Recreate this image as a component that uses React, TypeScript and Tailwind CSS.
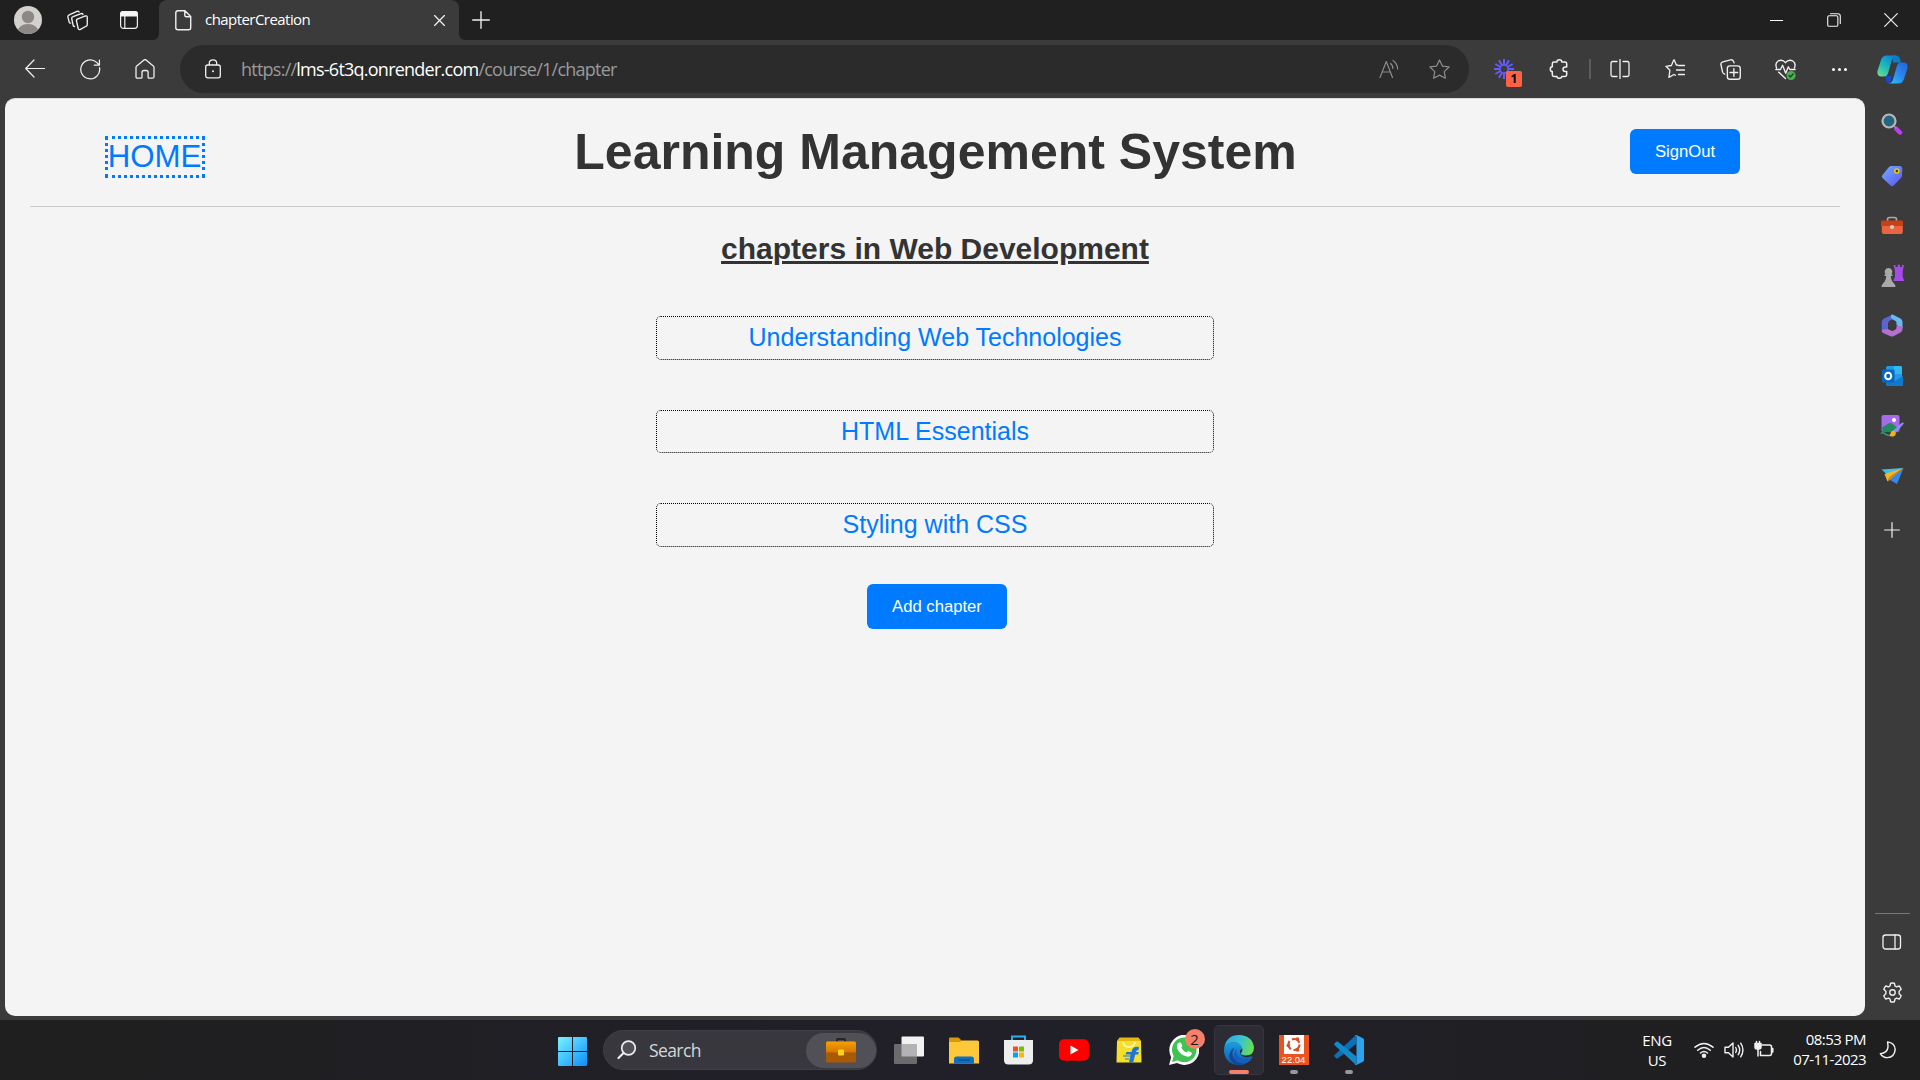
import React from 'react';

type IconProps = { children: React.ReactNode; size?: number; sw?: number; color?: string };

function Line({ children, size = 20, sw = 1.2, color = '#f0f0f0' }: IconProps) {
  return (
    <svg
      width={size}
      height={size}
      viewBox="0 0 20 20"
      fill="none"
      stroke={color}
      strokeWidth={sw}
      strokeLinecap="round"
      strokeLinejoin="round"
      className="shrink-0"
    >
      {children}
    </svg>
  );
}

function Slot({ className, children }: { className: string; children: React.ReactNode }) {
  return <div className={`flex shrink-0 items-center justify-center ${className}`}>{children}</div>;
}

const starPath = 'M10 .9l2.8 5.8 6.3.9-4.6 4.4 1.1 6.3L10 15.4l-5.6 2.9 1.1-6.3L.9 7.600l6.300-.9z';

function TabStrip() {
  return (
    <div className="flex h-10">
      <div className="flex w-[159px] items-center rounded-br-[6px] bg-[#202020]">
        <Slot className="w-14">
          <svg width="28" height="28" viewBox="0 0 28 28">
            <defs>
              <clipPath id="avatar">
                <circle cx="14" cy="14" r="14" />
              </clipPath>
            </defs>
            <g clipPath="url(#avatar)">
              <rect width="28" height="28" fill="#d3d1ce" />
              <circle cx="14" cy="11" r="6.2" fill="#8d8885" />
              <ellipse cx="14" cy="26" rx="10.5" ry="8" fill="#8d8885" />
            </g>
          </svg>
        </Slot>
        <Slot className="w-[43px]">
          <Line size={21} sw={1.3}>
            <path d="M11.500 8l6.100-2.300q1.700-.5 1.700 1.100v6.900q0 1.300-1.200 1.800l-5.300 2.900q-1.700.8-2.200-1L9 10.400q-.4-1.700 2.500-2.400z" />
            <path d="M7.200 15.700q-1 .2-1.300-.9L4.500 8.300q-.3-1.500 1.300-2L13.500 3.400q1.400-.4 1.700.9" />
            <path d="M3.400 12.500q-1 .1-1.300-.9L.9 6.800q-.3-1.500 1.200-2.100L9.600 1.300q1.400-.5 1.900.6" />
          </Line>
        </Slot>
        <Slot className="w-[60px]">
          <svg width="18" height="18" viewBox="0 0 18 18" fill="none" stroke="#f0f0f0" strokeWidth="1.200">
            <rect x=".6" y=".6" width="16.800" height="16.800" rx="2.800" />
            <path d="M3.400 .5h11.200Q17.500 .5 17.500 3.400V5H.5V3.400Q.5 .5 3.400 .5z" fill="#f6f6f6" />
            <path d="M4.800 5v12.500" />
          </svg>
        </Slot>
      </div>
      <div className="w-[300px] bg-[#202020]">
        <div className="flex h-10 items-center rounded-t-[8px] bg-[#3b3b3b] pr-[14px] pl-4">
          <svg width="17" height="21" viewBox="0 0 17 21" fill="none" stroke="#f0f0f0" strokeWidth="1.400" strokeLinejoin="round">
            <path d="M3 .8h7l5.700 5.700V17.800q0 2-2 2H3q-2.200 0-2.200-2V3q0-2.200 2.200-2.200zM9.800 1v4.200q0 1.500 1.500 1.500h4.200" />
          </svg>
          <span className="mt-[-2px] ml-[13px] flex-1 text-[15px] leading-5 tracking-[-0.550px] text-white">chapterCreation</span>
          <Line size={11} sw={2.300}>
            <path d="M1 1l18 18M19 1L1 19" />
          </Line>
        </div>
      </div>
      <div className="flex flex-1 items-center justify-between rounded-bl-[6px] bg-[#202020]">
        <Slot className="w-[43px]">
          <Line size={18} sw={1.500}>
            <path d="M10 .8v18.400M.8 10h18.400" />
          </Line>
        </Slot>
        <div className="flex">
          <Slot className="w-[57px]">
            <div className="h-px w-[13px] bg-white" />
          </Slot>
          <Slot className="w-[57px]">
            <Line size={14} sw={1.600}>
              <rect x="1" y="4" width="14.500" height="15" rx="2" />
              <path d="M5 1h10.500q3.500 0 3.500 3.500V15" />
            </Line>
          </Slot>
          <Slot className="w-[58px]">
            <Line size={14} sw={1.700}>
              <path d="M1 1l18 18M19 1L1 19" />
            </Line>
          </Slot>
        </div>
      </div>
    </div>
  );
}

function Copilot() {
  return (
    <svg width="31" height="29" viewBox="0 0 31 29">
      <defs>
        <linearGradient id="cpA" x1="0" y1="1" x2=".7" y2="0">
          <stop offset="0" stopColor="#7be08a" />
          <stop offset=".5" stopColor="#1ebbb8" />
          <stop offset="1" stopColor="#0a86d8" />
        </linearGradient>
        <linearGradient id="cpB" x1="1" y1="0" x2="0" y2="1">
          <stop offset="0" stopColor="#2363d8" />
          <stop offset=".5" stopColor="#2a87ee" />
          <stop offset="1" stopColor="#2cc5f5" />
        </linearGradient>
      </defs>
      <path d="M8 21h7l-2 7.500q-3 0-4-3z" fill="#1648d0" />
      <path d="M15 .5h4q3 0 4 3.500l1 3.500h-8z" fill="#087fce" />
      <path d="M9.500 .5H19q-3 .5-4 4l-4 14q-1 3-4 3H4.500Q-.5 21.500.6 15.500L4 5Q5.500 .5 9.500 .5z" fill="url(#cpA)" />
      <path d="M21.500 28.500H12q3-.5 4-4l4-14q1-3 4-3h2.500q5 0 3.900 6L27 24q-1.500 4.500-5.500 4.500z" fill="url(#cpB)" />
    </svg>
  );
}

function Toolbar() {
  return (
    <div className="flex h-[58px] items-start pt-[5px]">
      <div className="flex h-12 w-[180px] items-center pl-[7px]">
        <Slot className="w-[56px]">
          <Line size={20}>
            <path d="M19.500 9.500H.8M9 1L.7 9.500 9 18" />
          </Line>
        </Slot>
        <Slot className="w-[54px]">
          <Line size={21}>
            <path d="M18.600 8.200A9 9 0 1 1 15.800 3.200l2.700 2.600M18.500 1v4.800h-4.900" />
          </Line>
        </Slot>
        <Slot className="w-[56px]">
          <Line size={20} sw={1.300}>
            <path d="M1 8.500q0-.9.700-1.600L9 .9q1-.7 2 0l7.300 6q.7.700.7 1.600v9.200q0 1.500-1.500 1.500h-3.400q-1 0-1-1v-4.700q0-2-2-2H9q-2 0-2 2v4.700q0 1-1 1H2.500Q1 19.200 1 17.700z" />
          </Line>
        </Slot>
      </div>
      <div className="flex h-12 w-[1289px] items-center rounded-full bg-[#2b2b2b] pl-[25px]">
        <svg width="16" height="20" viewBox="0 0 16 20" fill="none" stroke="#f0f0f0" strokeWidth="1.300">
          <rect x=".7" y="6" width="14.600" height="12.800" rx="2" />
          <path d="M4.300 6V4.300q0-3.500 3.700-3.500t3.700 3.500V6" />
          <circle cx="8" cy="12.300" r="1" fill="#f0f0f0" stroke="none" />
        </svg>
        <div className="mt-[-1px] ml-[20px] flex-1 text-[18px] leading-6 tracking-[-0.760px] whitespace-nowrap text-[#9a9a9a]">
          https://<span className="text-white">lms-6t3q.onrender.com</span>/course/1/chapter
        </div>
        <Slot className="w-[50px]">
          <Line size={20} color="#8b8b8b">
            <path d="M1 18.500L7.300 2.500l6.200 16M3.200 13h8.200M11.500 4.500q2.500 1.800 2.300 5M14 1.500q4.300 3 4.600 8.500" />
          </Line>
        </Slot>
        <Slot className="mr-[5px] w-[50px]">
          <Line size={21} color="#8b8b8b">
            <path d={starPath} />
          </Line>
        </Slot>
      </div>
      <div className="flex h-12 flex-1 items-center pl-[8px]">
        <Slot className="w-[54px]">
          <div className="relative size-[20px]">
            <svg width="20" height="20" viewBox="0 0 20 20" stroke="#635bff" strokeWidth="2" fill="none">
              <circle cx="10" cy="10" r="4" strokeWidth="1.500" />
              <path d="M10 0v6M10 14v6M0 10h6M14 10h6M5 1.300l3 5.200M15 1.300l-3 5.200M5 18.700l3-5.200M15 18.700l-3-5.200M1.300 5l5.200 3M18.700 5l-5.200 3M1.300 15l5.200-3M18.700 15l-5.200-3" />
            </svg>
            <div className="absolute top-[12px] left-[12px] flex h-[16px] w-[16px] items-center justify-center rounded-[2px] bg-[#ff6242] font-['Open_Sans',sans-serif] text-[12px] leading-none font-bold text-black">
              1
            </div>
          </div>
        </Slot>
        <Slot className="w-[56px]">
          <Line size={20} sw={1.500}>
            <path d="M5 3h3Q7.800 .8 10.300 .8T12.800 3h3.200q1.700 0 1.700 1.700v3.200h-1.500q-2.200.2-2.200 2.300t2.200 2.200h1.500v3.400q0 1.700-1.700 1.700h-3.200q-.2 1.800-2.500 1.800T7.900 17.500h-3q-1.600 0-1.600-1.700v-3.200Q1.300 12.500 1.300 10.200T3.300 7.800V4.700Q3.300 3 5 3z" />
          </Line>
        </Slot>
        <div className="mx-[2px] h-5 w-[2px] bg-[#5c5c5c]" />
        <Slot className="w-[54px]">
          <Line size={20} sw={1.300}>
            <path d="M7 2.500H2.700Q1 2.500 1 4.200v11.600q0 1.700 1.700 1.700H7M13 2.500h4.300q1.700 0 1.700 1.700v11.600q0 1.700-1.700 1.700H13M10 .5v19" />
          </Line>
        </Slot>
        <Slot className="w-[56px]">
          <Line size={20} sw={1.300}>
            <path d="M12.500 6L11.300 6 9.500 1.400Q9 .6 8.500 1.400L6.400 6.500.9 7.300l4 3.900-1 7.200L9 15.500l1.500.8M13.500 6.500H19.500M11.500 11h8M13.500 15.500h6" />
          </Line>
        </Slot>
        <Slot className="w-[55px]">
          <Line size={21} sw={1.300}>
            <rect x="7" y="6.500" width="12.300" height="12.800" rx="2.500" />
            <path d="M13.200 9.300v7.200M9.500 12.900h7.300M4.500 14.500q-1.500-.5-2-2L.9 5.500Q.5 3.300 2.700 2.700L10 .8q2-.4 2.900 1.500l.5 1.400" />
          </Line>
        </Slot>
        <Slot className="w-[55px]">
          <Line size={21} sw={1.300}>
            <path d="M1.500 8.500Q-.3 4 3 1.900 7-.2 10 3.500 13-.2 17 1.900q3.300 2.100 1.500 6.600M.8 10h4.400l2-4 3 7.500 2.500-6 1.500 2.500h5M3.500 12.500l6.500 6" />
            <circle cx="15.300" cy="15.700" r="4.300" fill="#4caf50" stroke="none" />
            <path d="M13.300 15.800l1.400 1.400 2.600-3" stroke="#1e3d20" />
          </Line>
        </Slot>
        <Slot className="w-[53px]">
          <div className="flex gap-[3px]">
            <i className="size-[3px] rounded-full bg-white" />
            <i className="size-[3px] rounded-full bg-white" />
            <i className="size-[3px] rounded-full bg-white" />
          </div>
        </Slot>
        <Slot className="w-[52px]">
          <Copilot />
        </Slot>
      </div>
    </div>
  );
}

const chapters: { title: string; box: string }[] = [
  { title: 'Understanding Web Technologies', box: 'h-[44px] pb-px' },
  { title: 'HTML Essentials', box: 'h-[43px]' },
  { title: 'Styling with CSS', box: 'h-[44px] pb-px' },
];

function Page() {
  return (
    <main className="flex h-[918px] w-[1860px] flex-col rounded-[10px] border-t border-[#dadada] bg-[#f4f4f4] px-[25px] font-['Liberation_Sans',Arial,sans-serif]">
      <header className="flex h-[108px] items-start justify-between border-b border-[#cccccc] pr-[100px] pl-[75px]">
        <a className="mt-[37px] flex h-[42px] w-[100px] items-center justify-center border-[3px] border-dotted border-[#007bff] pr-px text-[31.250px] leading-[36px] text-[#007bff]">
          HOME
        </a>
        <h1 className="mt-[24px] ml-[36px] text-[50px] leading-[58px] font-bold whitespace-nowrap text-[#333333]">
          Learning Management System
        </h1>
        <button className="mt-[30px] h-[45px] w-[110px] rounded-[6px] bg-[#007bff] text-[16.670px] text-white">SignOut</button>
      </header>
      <h2 className="mt-[24px] text-center text-[30px] leading-[35px] font-bold text-[#333333] underline">
        chapters in Web Development
      </h2>
      <ul className="mt-[50px] flex flex-col items-center gap-[50px]">
        {chapters.map((c) => (
          <li
            key={c.title}
            className={`flex w-[558px] items-center justify-center rounded-[5px] border border-dotted border-black text-[25px] leading-[29px] text-[#007bff] ${c.box}`}
          >
            {c.title}
          </li>
        ))}
      </ul>
      <button className="mt-[37px] ml-[4px] h-[45px] w-[140px] self-center rounded-[6px] bg-[#007bff] text-[16.670px] text-white">
        Add chapter
      </button>
    </main>
  );
}

function Sidebar() {
  return (
    <aside className="flex w-[55px] flex-col items-center pr-px pb-[5px]">
      <Slot className="h-[52px]">
        <svg width="22" height="22" viewBox="0 0 22 22">
          <path d="M15.500 16l3.500 3.500" stroke="#c03cf5" strokeWidth="4.500" strokeLinecap="round" />
          <path d="M12.500 12.500l3 3" stroke="#888" strokeWidth="2" />
          <circle cx="8" cy="8" r="6.500" fill="#236684" stroke="#b9b7b4" strokeWidth="2.200" />
        </svg>
      </Slot>
      <Slot className="h-[51px]">
        <svg width="22" height="22" viewBox="0 0 22 22">
          <defs>
            <linearGradient id="tagG" x1="0" y1="0" x2="1" y2="1">
              <stop offset="0" stopColor="#76adff" />
              <stop offset="1" stopColor="#5654f0" />
            </linearGradient>
          </defs>
          <path d="M10 1h9q2.300 0 2.300 2.500l-.3 7q0 1.500-1 2.500l-7.500 7.600q-1.500 1.200-3 0l-8-7.600q-1.500-1.500 0-3L8 1.900Q9 1 10 1z" fill="url(#tagG)" />
          <circle cx="15.800" cy="6" r="2" fill="#333" stroke="#f0c800" strokeWidth="1.600" />
        </svg>
      </Slot>
      <Slot className="h-[50px]">
        <svg width="24" height="20" viewBox="0 0 24 20">
          <path d="M7.500 6V3.500Q7.500 1.500 9.500 1.500h5q2 0 2 2V6" fill="none" stroke="#a9a9a9" strokeWidth="1.700" />
          <rect x="1.800" y="5" width="21" height="13" rx="2" fill="#ea653e" />
          <path d="M1 5.500q0-1 1-1h20q1 0 1 1V10H1z" fill="#c83f18" />
          <circle cx="12" cy="11" r="2.100" fill="#cfcfcf" />
        </svg>
      </Slot>
      <Slot className="h-[49px]">
        <svg width="23" height="24" viewBox="0 0 23 24">
          <path d="M12.500 1h2v2h2V.7h2.500V3h2V1H23l-1.300 6v6l1.300 3v1H12.500v-1l1.500-3V7z" fill="#a64be8" />
          <path d="M7.500 4a4 4 0 0 1 3 6.500h1V12h-1.700q.3 5 3.200 7.500 1.500 1 1.500 3.500H.5q0-2.500 1.500-3.500Q5 17 5.200 12H3.500v-1.500h1A4 4 0 0 1 7.500 4z" fill="#a9a9a9" />
        </svg>
      </Slot>
      <Slot className="h-[51px]">
        <svg width="22" height="23" viewBox="0 0 22 23">
          <path d="M12 .6L3 4.500Q.7 6 .7 8.500v7.500q0 2 1.800 3.200L7 16V9.500q0-2 2-3l4.500-2z" fill="#5b65d0" />
          <path d="M10 .9q1.200-.6 2.500 0l7 3.600q2 1.300 2 3.700v6L15.500 11V8.500q0-1-1-1.500L11 5q-2-2-1-4.100z" fill="#69b9f2" />
          <path d="M21.500 12.500V15q0 2.500-2 3.500l-7 3.700q-1.500.8-3 0L2 19Q.7 18 .7 16l6-1 4 1.800q1 .3 2-.3l2-1.300q.8-.7.8-2v-1.700z" fill="#b56fd0" />
        </svg>
      </Slot>
      <Slot className="h-[49px]">
        <svg width="22" height="22" viewBox="0 0 22 22">
          <rect x="5" y="1" width="16" height="17" rx="1.500" fill="#1f9be8" />
          <path d="M13 1h6.500Q21 1 21 2.500V9h-8z" fill="#34b6f5" />
          <path d="M5 13l9 3 8-5v9q0 1-1 1H6q-1 0-1-1z" fill="#1278cc" />
          <rect x="1" y="4.500" width="12.500" height="13" rx="1.200" fill="#0868be" />
          <ellipse cx="7.200" cy="11" rx="3" ry="3.300" fill="none" stroke="#fff" strokeWidth="2" />
        </svg>
      </Slot>
      <Slot className="h-[51px]">
        <svg width="25" height="24" viewBox="0 0 25 24">
          <rect x="1.500" y="1" width="18" height="17" rx="2" fill="#a86be8" />
          <path d="M2 13.500l6.500-4q2-1 4 .3l5 4V18H3z" fill="#1e8c5c" />
          <circle cx="14" cy="6" r="2" fill="#fff" />
          <path d="M13 16.500L21.500 9q2-1 2.300.5l-8 9.500z" fill="#8b8df5" />
          <path d="M9 21.500q1.500-1 2-3.500 2-2.500 4.500 0 1 3-1.500 4.200-3 1-5-.7z" fill="#f2b01e" />
          <path d="M1 19.500q2-1.500 3.500 0T9 21.500" stroke="#24a36c" strokeWidth="1.600" fill="none" />
        </svg>
      </Slot>
      <Slot className="h-[50px]">
        <svg width="23" height="18" viewBox="0 0 23 18">
          <path d="M.5 2.500L22.500 1 7 8.500z" fill="#3dc0e8" />
          <path d="M22.500 1l-6.500 16-8-4.500z" fill="#3486f0" />
          <path d="M22.500 1L3.500 7l3 7.500L9 10z" fill="#f4b52a" />
          <path d="M22.500 1L9 10l-2.500 5 4-3.500z" fill="#d98b10" />
        </svg>
      </Slot>
      <Slot className="h-[58px]">
        <Line size={16} sw={1.500}>
          <path d="M10 .8v18.400M.8 10h18.400" />
        </Line>
      </Slot>
      <div className="mt-auto h-px w-[35px] bg-[#777777]" />
      <Slot className="h-[55px]">
        <Line size={20} sw={1.300}>
          <rect x="1" y="3" width="17.500" height="14" rx="2.500" />
          <path d="M13 3v14" />
        </Line>
      </Slot>
      <Slot className="h-[46px]">
        <Line size={21} sw={1.300}>
          <path d="M8.200 1.200q1.800-.5 3.600 0l.6 2.600 1.400.8 2.600-.8q1.300 1.300 1.900 3.200l-2 1.900v2.200l2 1.900q-.6 1.900-1.900 3.200l-2.600-.8-1.400.8-.6 2.600q-1.800.5-3.600 0l-.6-2.600-1.400-.8-2.600.8Q2.300 14.900 1.700 13l2-1.900V8.900l-2-1.900q.6-1.900 1.900-3.200l2.600.8 1.400-.8z" />
          <circle cx="10" cy="10" r="2.600" />
        </Line>
      </Slot>
    </aside>
  );
}

function Taskbar() {
  return (
    <footer className="flex h-[60px] items-center bg-linear-to-r from-[#1f1f1f] via-[#21202a] to-[#1f1f1f] pl-[558px]">
      <svg width="29" height="29" viewBox="0 0 29 29" className="mt-[2px]">
        <defs>
          <linearGradient id="winG" x1="0" y1="0" x2="1" y2="1">
            <stop offset="0" stopColor="#7af3ff" />
            <stop offset="1" stopColor="#0b8efc" />
          </linearGradient>
        </defs>
        <path d="M1 0h13v14H0V1q0-1 1-1zM15 0h13q1 0 1 1v13H15zM0 15h14v14H1q-1 0-1-1zM15 15h14v13q0 1-1 1H15z" fill="url(#winG)" />
      </svg>
      <div className="ml-[16px] flex h-10 w-[274px] items-center rounded-full border border-[#403f46] bg-[#38373e] pl-[13px]">
        <svg width="20" height="20" viewBox="0 0 20 20" fill="none" stroke="#eeeeee" strokeWidth="1.700">
          <circle cx="11.500" cy="8" r="6.800" fill="#505057" />
          <path d="M6.500 13L1.500 18" strokeWidth="2.200" strokeLinecap="round" />
        </svg>
        <span className="ml-[12px] flex-1 text-[17.500px] leading-6 tracking-[-0.6px] text-[#d6d6d8]">Search</span>
        <div className="flex h-[35px] w-[70px] items-center justify-center rounded-full bg-[#515057]">
          <svg width="30" height="25" viewBox="0 0 30 25">
            <defs>
              <linearGradient id="bagA" x1="0" y1="0" x2="0" y2="1">
                <stop offset="0" stopColor="#f7a000" />
                <stop offset="1" stopColor="#d37500" />
              </linearGradient>
            </defs>
            <path d="M11 4V2q0-1 1-1h6q1 0 1 1v2" stroke="#252525" strokeWidth="2" fill="none" />
            <rect y="3.500" width="30" height="21" rx="1.500" fill="#a85a08" />
            <path d="M0 5q0-1.500 1.500-1.500h27Q30 3.500 30 5v9.500H0z" fill="url(#bagA)" />
            <rect x="12" y="11.500" width="6" height="6" rx="1" fill="#ffd21e" />
          </svg>
        </div>
      </div>
      <div className="ml-[4px] flex items-center">
        <Slot className="h-[50px] w-[55px]">
          <svg width="30" height="28" viewBox="0 0 30 28">
            <rect x="7.500" y=".5" width="22.500" height="20" rx="1" fill="#f2f2f2" />
            <rect y="8" width="23" height="20" rx="1" fill="#6b6b6e" />
            <rect x="7.500" y="8" width="15.500" height="12.500" fill="#b3b3b5" />
          </svg>
        </Slot>
        <Slot className="h-[50px] w-[55px]">
          <svg width="30" height="27" viewBox="0 0 30 27">
            <path d="M0 1.500Q0 .5 1 .5h8.500L13 4v6H0z" fill="#d99a08" />
            <path d="M0 5h11l2-1.500h15.500Q30 3.500 30 5v21.500H0z" fill="#fdc83a" />
            <path d="M5 26.500V22q0-2.500 2.500-2.500h15Q25 19.500 25 22v4.500z" fill="#0f6fc0" />
            <path d="M9 23h12" stroke="#0a4c8c" strokeWidth="1.300" />
          </svg>
        </Slot>
        <Slot className="h-[50px] w-[55px]">
          <svg width="29" height="30" viewBox="0 0 29 30">
            <path d="M8 6V1.500h13V6" stroke="#2cb0ea" strokeWidth="2" fill="none" />
            <path d="M0 5h29v20q0 4.500-4.500 4.500h-20Q0 29.500 0 25z" fill="#eeeeee" />
            <path d="M9 11.500h5v5H9z" fill="#f04e25" />
            <path d="M15 11.500h5v5h-5z" fill="#80bb08" />
            <path d="M9 17.500h5v5H9z" fill="#05a5ee" />
            <path d="M15 17.500h5v5h-5z" fill="#fcb80a" />
          </svg>
        </Slot>
        <Slot className="h-[50px] w-[55px]">
          <svg width="30" height="22" viewBox="0 0 30 22">
            <rect y=".3" width="30" height="21.400" rx="5" fill="#fe0000" />
            <path d="M11.500 6.500l8 4.500-8 4.500z" fill="#fff" />
          </svg>
        </Slot>
        <Slot className="h-[50px] w-[55px]">
          <svg width="26" height="26" viewBox="0 0 26 26">
            <path d="M3.500 .5h19L25 4H1z" fill="#e3b912" />
            <path d="M1 4h24l.5 21.500h-25z" fill="#f4e02c" />
            <path d="M7 5q1 5 6 5t6-5" fill="none" stroke="#fdf7b8" strokeWidth="1.300" />
            <path d="M23 10q-5-1-6.500 2l-1 3h-5l-1 2.500h5L13 25.500h4.200l2-8h3l.6-2.500h-3q.5-2 2.700-2z" fill="#1f74d8" />
            <path d="M7 19h7M9 22h4" stroke="#1f74d8" />
          </svg>
        </Slot>
        <Slot className="h-[50px] w-[55px]">
          <div className="relative size-[30px]">
            <svg width="30" height="30" viewBox="0 0 30 30">
              <path d="M0 30l2.200-7.800A15 15 0 1 1 8 28z" fill="#fff" />
              <circle cx="15.300" cy="14.700" r="12.300" fill="#3fc351" />
              <path d="M3 27l2-7 5 5z" fill="#3fc351" />
              <path d="M10.500 7.500q1.300-.3 1.800.8l1 2.500q.2.700-1 2 1.800 3.500 5.300 4.800 1.500-1.800 2-1.600l2.800 1.400q.8.400.3 1.900-1 2.700-4.200 2.400Q10.500 20 8 13q-.8-4.500 2.500-5.500z" fill="#fff" />
            </svg>
            <div className="absolute -top-[6px] left-[16px] flex size-5 items-center justify-center rounded-full bg-[#f6806a] text-[15px] leading-none text-[#1b1b1b]">2</div>
          </div>
        </Slot>
        <Slot className="w-[55px]">
          <div className="flex h-[50px] w-[50px] flex-col items-center rounded-[5px] border border-[#373640] bg-[#2d2c35] pt-[9px]">
            <svg width="30" height="30" viewBox="0 0 30 30" className="shrink-0">
              <defs>
                <linearGradient id="edA" x1="0" y1=".3" x2="1" y2=".5">
                  <stop offset="0" stopColor="#2aa7e8" />
                  <stop offset=".5" stopColor="#35c2d8" />
                  <stop offset="1" stopColor="#6be04a" />
                </linearGradient>
                <linearGradient id="edB" x1="0" y1="0" x2="0" y2="1">
                  <stop offset="0" stopColor="#1b9de2" />
                  <stop offset="1" stopColor="#0c59a8" />
                </linearGradient>
              </defs>
              <path d="M.3 12.500Q3 7.500 9.500 7.500q8 0 9 6-3 1-2.500 4 1.500 5 7 4.800l5-1Q24.500 30 15 30 1 29.500 0 16z" fill="url(#edB)" />
              <path d="M10.500 12.500q-4.500 7 .5 12.500 5 4.500 12 2.500-4 2.500-8 2.500-7.500-.5-9.500-8-.5-6.500 5-9.500z" fill="#174494" />
              <path d="M12.500 14q-1 8 6.500 10 5 .5 8.500-2.500 1.500-.5 1 1-3 5.500-8.500 6-7 .5-9.500-5.500-1.500-5.500 2-9z" fill="#145fbd" />
              <path d="M.3 12.500Q2.500 0 15 0q13.500.5 15 12.500 0 8-8.500 8-4.500-.3-4.500-2.300 2-2 1.300-5Q16.500 7.500 9.500 7.500q-6.500 0-9.200 5z" fill="url(#edA)" />
            </svg>
            <div className="mt-[5px] h-[4px] w-5 shrink-0 rounded-full bg-[#f6806a]" />
          </div>
        </Slot>
        <Slot className="w-[55px]">
          <div className="flex h-[50px] flex-col items-center pt-[10px]">
            <div className="flex h-[30px] w-[30px] shrink-0 flex-col items-center bg-[#e95420]">
              <svg width="20" height="19" viewBox="0 0 20 19" className="shrink-0">
                <rect width="20" height="19" fill="#fff" />
                <circle cx="10" cy="9.500" r="5.500" fill="none" stroke="#d9502a" strokeWidth="2.200" strokeDasharray="9 2.500" />
                <circle cx="4.300" cy="10.500" r="1.800" fill="#d9502a" />
                <circle cx="13.500" cy="4" r="1.800" fill="#d9502a" />
                <circle cx="13.500" cy="15" r="1.800" fill="#d9502a" />
              </svg>
              <span className="font-['Liberation_Sans',sans-serif] text-[9.500px] leading-[11px] text-white">22.04</span>
            </div>
            <div className="mt-[5px] h-[4px] w-2 rounded-full bg-[#98989c]" />
          </div>
        </Slot>
        <Slot className="w-[55px]">
          <div className="flex h-[50px] flex-col items-center pt-[10px]">
            <svg width="30" height="30" viewBox="0 0 30 30" className="shrink-0">
              <path d="M22.500 8.500L3.700 23.400q-.8.400-1.500-.1L.5 21.500q-.8-.8 0-1.600L22 0z" fill="#0a70b8" />
              <path d="M22.500 21.500L3.700 6.600q-.8-.4-1.500.1L.5 8.500q-.8.800 0 1.600L22 30z" fill="#1389cc" />
              <path d="M22.300 0L29 3.200q1 .5 1 1.700v20.200q0 1.200-1 1.700L22.300 30q-1 .2-1.800-.6 2 .5 2-1.400V2q0-1.900-2-1.400.8-.8 1.800-.6z" fill="#2ba3ee" />
            </svg>
            <div className="mt-[5px] h-[4px] w-2 rounded-full bg-[#98989c]" />
          </div>
        </Slot>
      </div>
      <div className="ml-auto flex items-center text-[15px] leading-5 text-white">
        <div className="mr-[12px] w-[40px] text-center tracking-[-0.4px]">
          ENG
          <br />
          US
        </div>
        <Slot className="w-[30px]">
          <Line size={20} sw={1.500}>
            <path d="M1 7.200q9-7.500 18 0M3.700 10.200q6.300-5.500 12.600 0M6.500 13q3.500-3 7 0" />
            <circle cx="10" cy="15.700" r="1.500" fill="#f0f0f0" />
          </Line>
        </Slot>
        <Slot className="w-[30px]">
          <Line size={20} sw={1.400}>
            <path d="M1 7.300h3.500L9 3v14l-4.500-4.300H1zM11.700 7.500q1.500 2.500 0 5M14.200 5.300q3 4.700 0 9.400M16.700 3.200q4.500 6.800 0 13.600" />
          </Line>
        </Slot>
        <Slot className="w-[30px]">
          <Line size={20} sw={1.500}>
            <path d="M8 5h7.500q2 0 2 2v6.500q0 2-2 2H6.500V11.500M18.800 8.500v3.500" />
            <path d="M1 3.500h6V7q0 2-2 2H3Q1 9 1 7z" fill="#f0f0f0" />
            <path d="M2.500 3.500V1.500M5.500 3.500V1.500M4 9v7" />
          </Line>
        </Slot>
        <div className="mr-px mt-[-2px] ml-[7px] w-[80px] text-right tracking-[-0.550px]">
          08:53 PM
          <br />
          07-11-2023
        </div>
        <Slot className="mr-[12px] w-[41px]">
          <Line size={18} sw={1.600}>
            <path d="M9.500 1q8 1 8.500 8.500Q17 18 9.500 18.500 4 18.500 1.500 14 9.500 13.500 10 6.500 10 3.500 9.500 1z" />
          </Line>
        </Slot>
      </div>
    </footer>
  );
}

export default function App() {
  return (
    <div className="flex h-[1080px] w-[1920px] flex-col overflow-hidden bg-[#3b3b3b] font-['Open_Sans','Noto_Sans',sans-serif]">
      <TabStrip />
      <Toolbar />
      <div className="flex h-[922px] pl-[5px]">
        <Page />
        <Sidebar />
      </div>
      <Taskbar />
    </div>
  );
}
